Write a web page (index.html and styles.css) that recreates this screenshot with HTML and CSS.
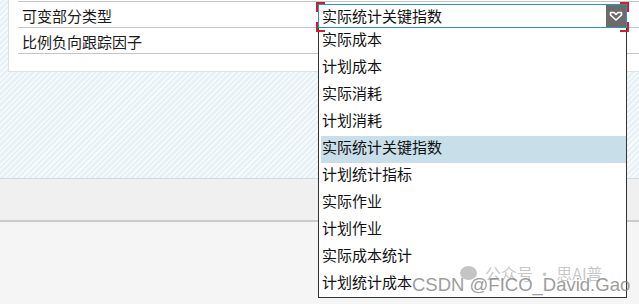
FILE: index.html
```html
<!DOCTYPE html>
<html lang="zh">
<head>
    <meta charset="UTF-8">
    <title>Variant</title>
    <link rel="stylesheet" href="styles.css">
</head>
<body>
    <div class="content">
        <div class="panel">
            <div class="row">可变部分类型</div>
            <div class="row">比例负向跟踪因子</div>
        </div>
    </div>
    <div class="toolbar"></div>
    <div class="footer"></div>

    <div class="combo">
        <span class="corner tl"></span>
        <span class="corner tr"></span>
        <span class="corner bl"></span>
        <span class="corner br"></span>
        <div class="combo-input">
            <span class="combo-value">实际统计关键指数</span>
            <span class="combo-btn">
                <svg width="14" height="11" viewBox="0 0 14 11">
                    <path d="M1.5 1.5 H5 L7 3.5 L9 1.5 H12.5 V4 L7 9 L1.5 4 Z" fill="none" stroke="#fff" stroke-width="1.6" stroke-linejoin="round"/>
                </svg>
            </span>
        </div>
        <ul class="combo-list">
            <li>实际成本</li>
            <li>计划成本</li>
            <li>实际消耗</li>
            <li>计划消耗</li>
            <li class="active">实际统计关键指数</li>
            <li>计划统计指标</li>
            <li>实际作业</li>
            <li>计划作业</li>
            <li>实际成本统计</li>
            <li>计划统计成本</li>
        </ul>
    </div>

    <div class="watermark">
        <span class="wm-top"><span class="wm-icon"></span>公众号 · 思AI普</span>
        <span class="wm-bottom">CSDN @FICO_David.Gao</span>
    </div>
</body>
</html>
```

FILE: styles.css
```css
body {
    margin: 0;
    width: 639px;
    height: 304px;
    overflow: hidden;
    position: relative;
    font-family: "Noto Sans CJK SC", "Noto Sans", sans-serif;
    background-color: #f5f5f5;
    color: #1a1a1a;
}
.content {
    height: 178px;
    border-bottom: 1px solid #d4d9dc;
    background-color: #ecf4f8;
    background-image: repeating-linear-gradient(135deg, #f8fbfd 0, #f8fbfd 1.5px, #e8f1f6 1.5px, #e8f1f6 4px);
}
.panel {
    margin-left: 8px;
    height: 70px;
    background-color: #fff;
    border-left: 1px solid #dde2e5;
    border-bottom: 1px solid #dde2e5;
    padding-left: 9px;
    padding-top: 1px;
}
.row {
    height: 25px;
    line-height: 27px;
    border-top: 1px solid #c6c6c6;
    font-size: 15px;
    padding-left: 4px;
}
.row:last-child {
    border-bottom: 1px solid #c6c6c6;
}
.toolbar {
    height: 41px;
    background-color: #f0f0f0;
    border-bottom: 2px solid #cacaca;
}
.footer {
    height: 80px;
    background-color: #f5f5f5;
}
.combo {
    position: absolute;
    left: 318px;
    top: 4px;
    width: 309px;
}
.corner {
    position: absolute;
    width: 7px;
    height: 8px;
    border-color: #c8232c;
    border-style: solid;
    border-width: 0;
}
.corner.tl { left: -2px; top: -2px; border-left-width: 2px; border-top-width: 2px; }
.corner.tr { right: -2px; top: -2px; border-right-width: 2px; border-top-width: 2px; }
.corner.bl { left: -2px; top: 18px; border-left-width: 2px; border-bottom-width: 2px; }
.corner.br { right: -2px; top: 18px; border-right-width: 2px; border-bottom-width: 2px; }
.combo-input {
    display: flex;
    height: 22px;
    border: 1px solid #2b95b9;
    background-color: #fff;
}
.combo-value {
    flex: 1;
    font-size: 15px;
    line-height: 22px;
    padding-left: 3px;
    color: #111;
}
.combo-btn {
    width: 20px;
    background-color: #6b6b6b;
    display: flex;
    align-items: center;
    justify-content: center;
}
.combo-list {
    list-style: none;
    margin: 0;
    padding: 0 0 0 2px;
    height: 269px;
    background-color: #fff;
    border: 1px solid #333;
    border-top: none;
}
.combo-list li {
    height: 27px;
    line-height: 21px;
    font-size: 15px;
    padding-left: 1px;
    color: #111;
}
.combo-list li.active {
    background-color: #c8dfe9;
}
.watermark {
    position: absolute;
    left: 412px;
    top: 261px;
    width: 220px;
    height: 40px;
}
.wm-top {
    position: absolute;
    left: 48px;
    top: 0;
    font-size: 16px;
    color: rgba(150, 150, 150, 0.55);
    display: flex;
    align-items: center;
    gap: 8px;
}
.wm-icon {
    width: 17px;
    height: 14px;
    border-radius: 50%;
    background-color: rgba(150, 150, 150, 0.55);
}
.wm-bottom {
    position: absolute;
    left: 0;
    top: 13px;
    font-family: "Liberation Sans", Arial, sans-serif;
    font-size: 18.5px;
    color: rgba(130, 130, 130, 0.8);
    white-space: nowrap;
}
```
